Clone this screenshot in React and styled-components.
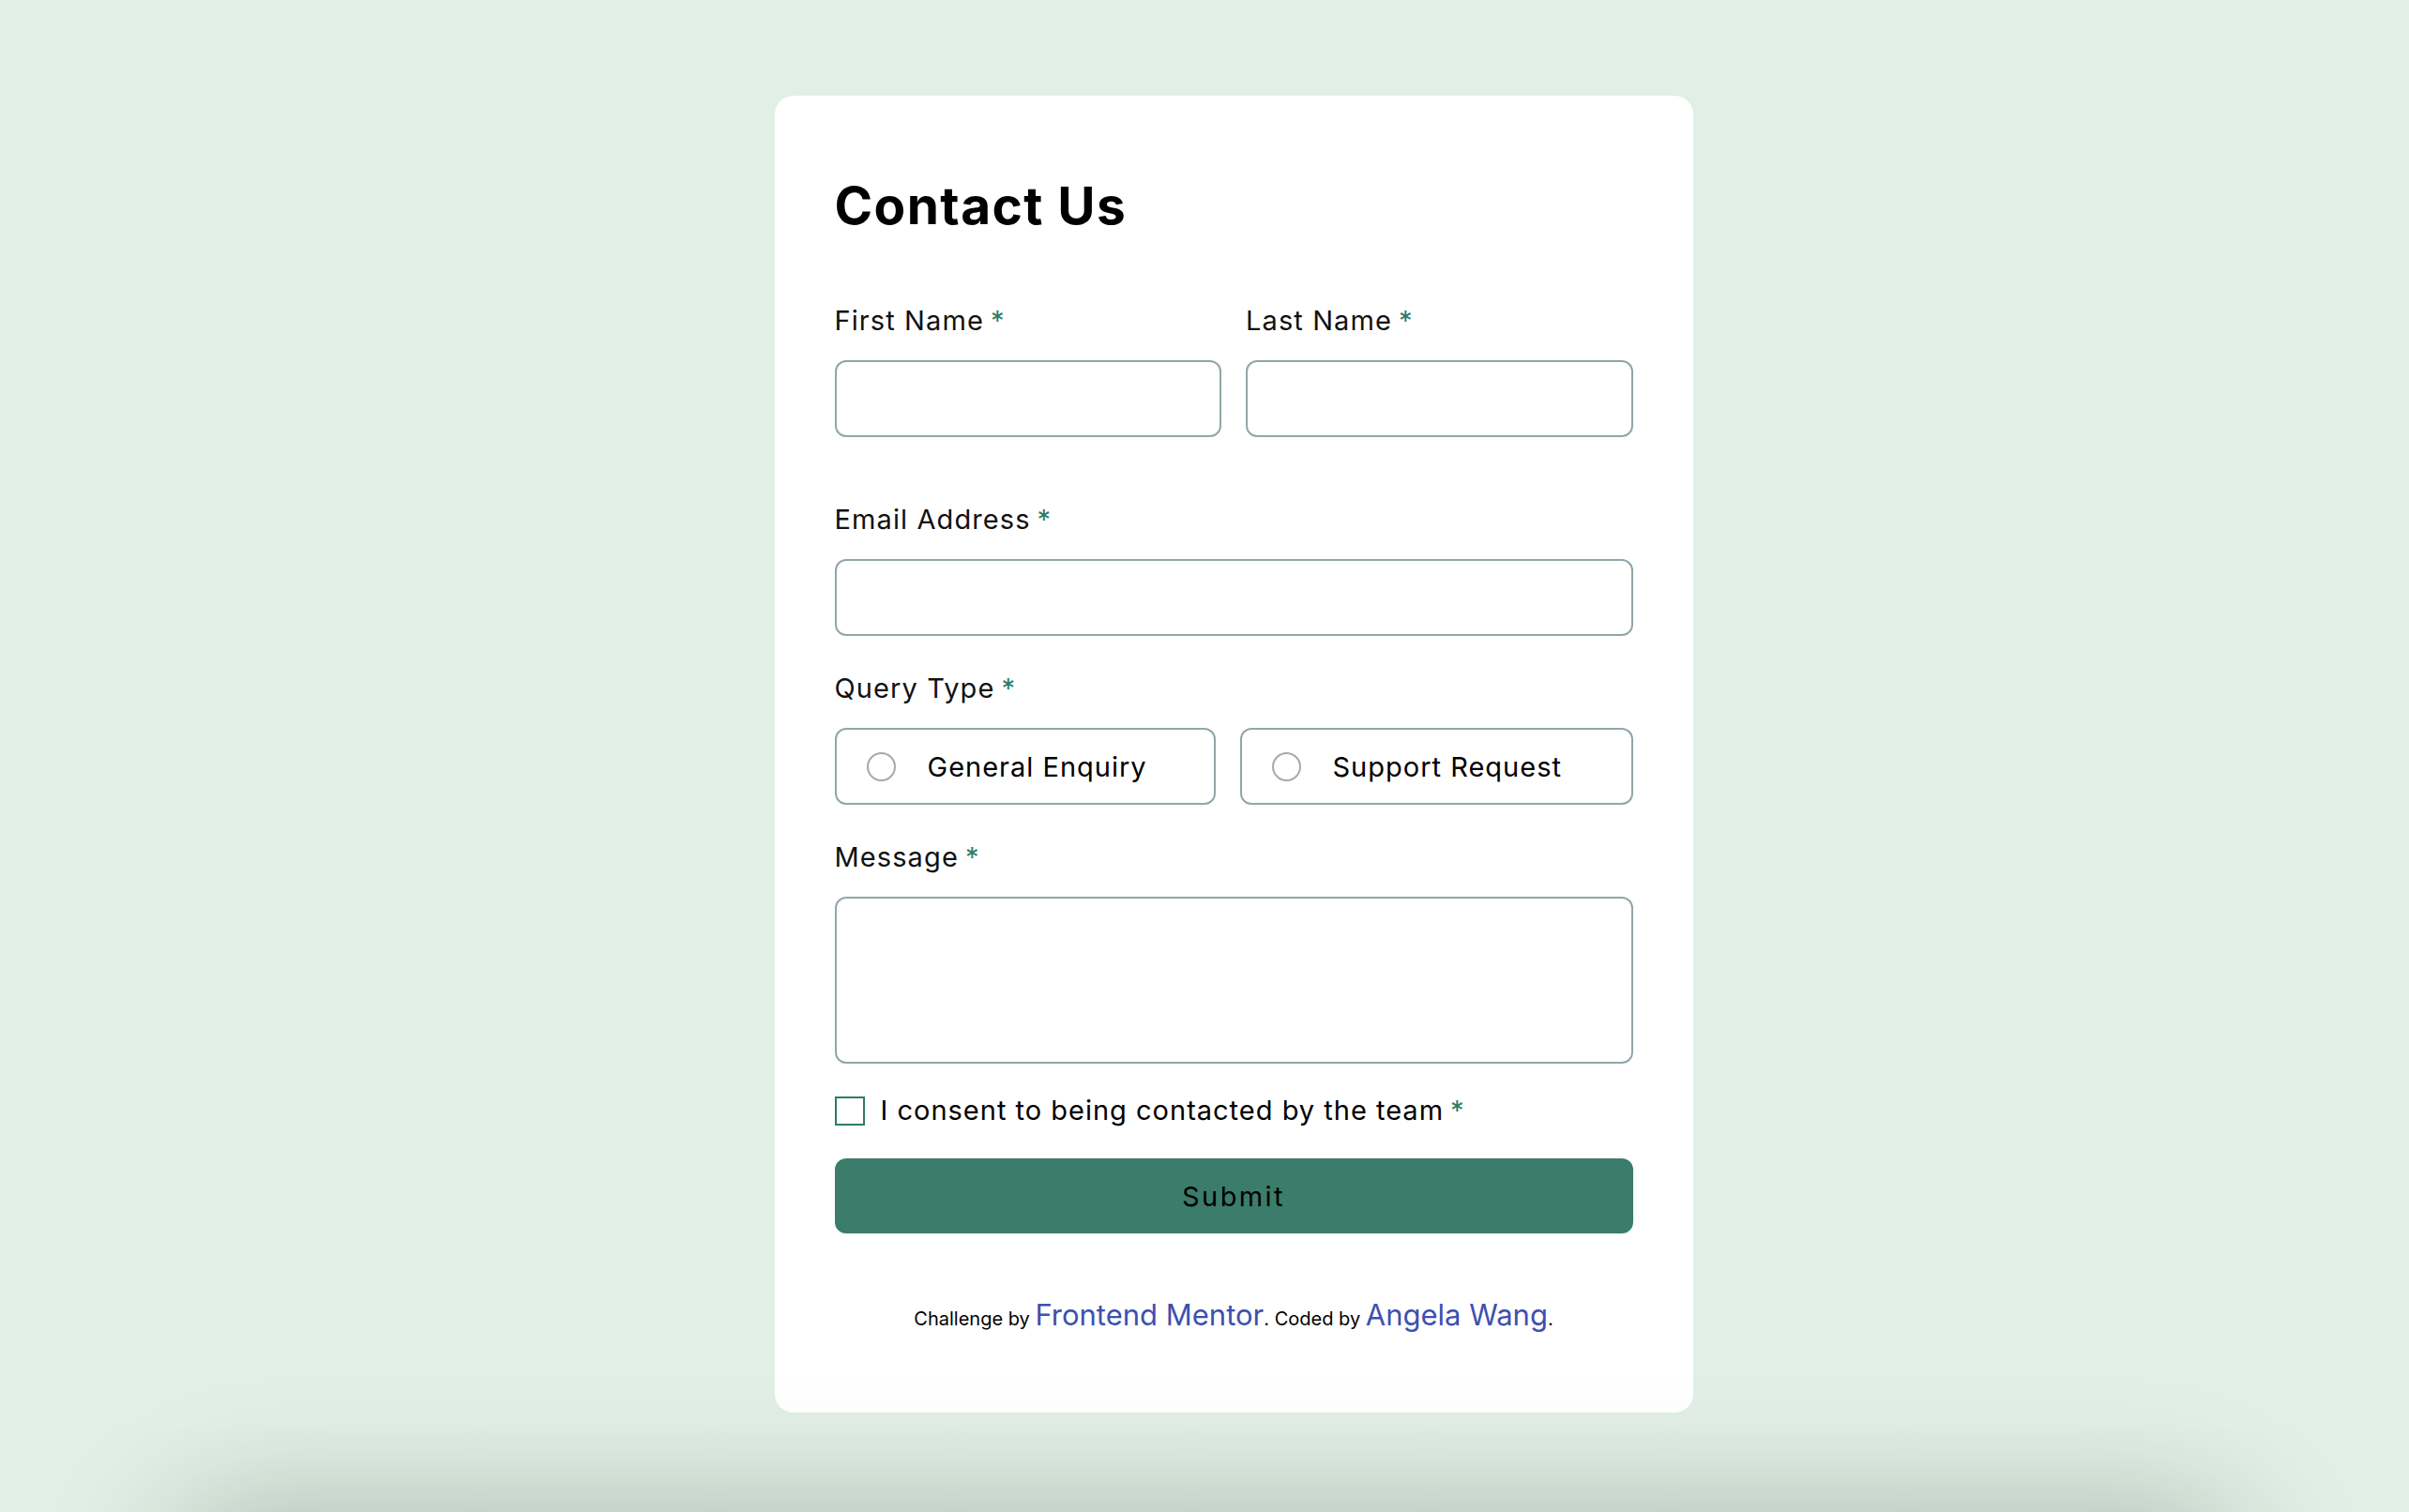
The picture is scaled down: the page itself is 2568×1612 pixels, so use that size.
import React from 'react'
import styled, { createGlobalStyle } from 'styled-components'

const GlobalStyle = createGlobalStyle`
  * {
    box-sizing: border-box;
  }
  html, body {
    margin: 0;
    padding: 0;
  }
  body {
    background-color: #e1efe6;
    font-family: Inter, 'Noto Sans', sans-serif;
    color: #000;
  }
`

const Page = styled.div`
  display: flex;
  flex-direction: column;
  align-items: center;
  height: 100vh;
  overflow: hidden;
  padding: 102px 0 0 62px;
`

const Card = styled.div`
  width: 979px;
  flex-shrink: 0;
  background-color: #fff;
  border-radius: 20px;
  padding: 84px 64px 86px;
`

const Title = styled.h1`
  margin: 0 0 72px;
  font-size: 55px;
  line-height: 66px;
  font-weight: 700;
  letter-spacing: 1.4px;
`

const Form = styled.form`
  display: flex;
  flex-direction: column;
  gap: 32px;
`

const NameRow = styled.div`
  display: grid;
  grid-template-columns: 1fr 1fr;
  gap: 26px;
  margin-bottom: 38px;
`

const Field = styled.div`
  display: flex;
  flex-direction: column;
  gap: 24px;
  margin-bottom: ${p => (p.$last ? 0 : 6)}px;
`

const Label = styled.label`
  font-size: 29px;
  line-height: 36px;
  letter-spacing: 1.1px;
  color: #111;
`

const Star = styled.span`
  color: #2e7c68;
  margin-left: 7px;
`

const Input = styled.input`
  height: 82px;
  width: 100%;
  border: 2px solid #90a7aa;
  border-radius: 12px;
  padding: 0 24px;
  font-size: 28px;
  font-family: inherit;
  outline: none;
`

const TextArea = styled.textarea`
  height: 178px;
  width: 100%;
  border: 2px solid #90a7aa;
  border-radius: 12px;
  padding: 20px 24px;
  font-size: 28px;
  font-family: inherit;
  resize: none;
  outline: none;
`

const RadioRow = styled.div`
  display: grid;
  grid-template-columns: 406fr 419fr;
  gap: 26px;
`

const RadioBox = styled.label`
  display: flex;
  align-items: center;
  gap: 34px;
  height: 82px;
  border: 2px solid #90a7aa;
  border-radius: 12px;
  padding: 0 32px;
  font-size: 29px;
  letter-spacing: 1px;
  cursor: pointer;
`

const Radio = styled.input`
  appearance: none;
  margin: 0;
  width: 31px;
  height: 31px;
  border: 2px solid #a8a8a8;
  border-radius: 50%;
  flex-shrink: 0;
`

const ConsentRow = styled.label`
  display: flex;
  align-items: center;
  gap: 17px;
  font-size: 29px;
  line-height: 36px;
  letter-spacing: 1px;
  margin-bottom: 1px;
`

const Check = styled.input`
  appearance: none;
  margin: 0;
  width: 32px;
  height: 31px;
  border: 2px solid #2e7c68;
  border-radius: 0;
  flex-shrink: 0;
`

const Submit = styled.button`
  height: 80px;
  width: 100%;
  border: none;
  border-radius: 12px;
  background-color: #3b7c6b;
  color: #000;
  font-family: inherit;
  font-size: 29px;
  letter-spacing: 2.4px;
  cursor: pointer;
`

const Attribution = styled.p`
  margin: 68px 0 0;
  text-align: center;
  font-size: 20px;
`

const Credit = styled.a`
  font-size: 31px;
  color: #3e50b0;
  text-decoration: none;
`

const Shade = styled.div`
  margin-top: auto;
  flex-shrink: 0;
  width: calc(100% - 310px);
  margin-left: -62px;
  height: 200px;
  margin-bottom: -205px;
  border-radius: 60px;
  box-shadow: 0 0 140px rgba(0, 30, 10, 0.28);
`

const Required = () => <Star>*</Star>

export default function App() {
  return (
    <>
      <GlobalStyle />
      <Page>
        <Card>
          <Title>Contact Us</Title>
          <Form onSubmit={e => e.preventDefault()}>
            <NameRow>
              <Field $last>
                <Label>
                  First Name
                  <Required />
                </Label>
                <Input type="text" />
              </Field>
              <Field $last>
                <Label>
                  Last Name
                  <Required />
                </Label>
                <Input type="text" />
              </Field>
            </NameRow>
            <Field>
              <Label>
                Email Address
                <Required />
              </Label>
              <Input type="email" />
            </Field>
            <Field>
              <Label>
                Query Type
                <Required />
              </Label>
              <RadioRow>
                <RadioBox>
                  <Radio type="radio" name="query" />
                  General Enquiry
                </RadioBox>
                <RadioBox>
                  <Radio type="radio" name="query" />
                  Support Request
                </RadioBox>
              </RadioRow>
            </Field>
            <Field $last>
              <Label>
                Message
                <Required />
              </Label>
              <TextArea />
            </Field>
            <ConsentRow>
              <Check type="checkbox" />
              <span>
                I consent to being contacted by the team
                <Required />
              </span>
            </ConsentRow>
            <Submit type="submit">Submit</Submit>
          </Form>
          <Attribution>
            Challenge by <Credit href="#">Frontend Mentor</Credit>. Coded by{' '}
            <Credit href="#">Angela Wang</Credit>.
          </Attribution>
        </Card>
        <Shade />
      </Page>
    </>
  )
}
